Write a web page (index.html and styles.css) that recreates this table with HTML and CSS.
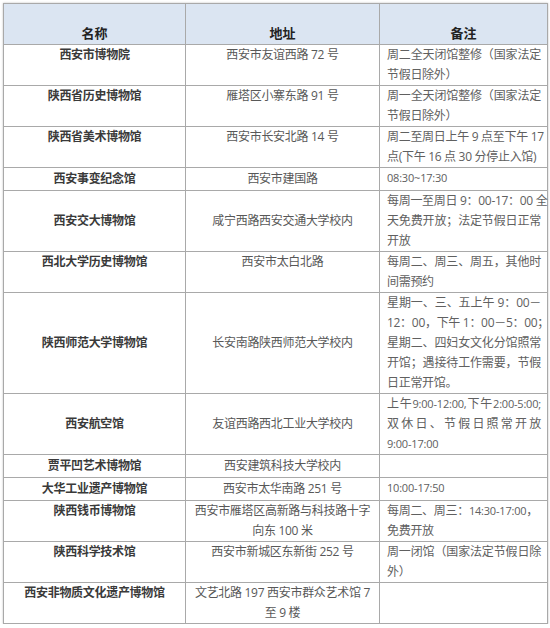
FILE: index.html
```html
<!DOCTYPE html>
<html lang="zh-CN">
<head>
<meta charset="utf-8">
<title>西安博物馆一览</title>
<link rel="stylesheet" href="styles.css">
</head>
<body>
<table class="museums">
  <colgroup>
    <col class="c-name">
    <col class="c-addr">
    <col class="c-note">
  </colgroup>
  <thead>
    <tr class="head">
      <th>名称</th>
      <th>地址</th>
      <th>备注</th>
    </tr>
  </thead>
  <tbody>
    <tr>
      <td class="name">西安市博物院</td>
      <td class="addr">西安市友谊西路 72 号</td>
      <td class="note"><span class="ln j">周二全天闭馆整修（国家法定</span><span class="ln">节假日除外）</span></td>
    </tr>
    <tr>
      <td class="name">陕西省历史博物馆</td>
      <td class="addr">雁塔区小寨东路 91 号</td>
      <td class="note"><span class="ln j">周一全天闭馆整修（国家法定</span><span class="ln">节假日除外）</span></td>
    </tr>
    <tr>
      <td class="name">陕西省美术博物馆</td>
      <td class="addr">西安市长安北路 14 号</td>
      <td class="note"><span class="ln j">周二至周日上午 9 点至下午 17</span><span class="ln">点(下午 16 点 30 分停止入馆)</span></td>
    </tr>
    <tr class="single">
      <td class="name">西安事变纪念馆</td>
      <td class="addr">西安市建国路</td>
      <td class="note"><span class="ln sm">08:30~17:30</span></td>
    </tr>
    <tr class="mid">
      <td class="name">西安交大博物馆</td>
      <td class="addr">咸宁西路西安交通大学校内</td>
      <td class="note"><span class="ln j">每周一至周日 9：00-17：00 全</span><span class="ln j">天免费开放；法定节假日正常</span><span class="ln">开放</span></td>
    </tr>
    <tr>
      <td class="name">西北大学历史博物馆</td>
      <td class="addr">西安市太白北路</td>
      <td class="note"><span class="ln j">每周二、周三、周五，其他时</span><span class="ln">间需预约</span></td>
    </tr>
    <tr class="mid">
      <td class="name">陕西师范大学博物馆</td>
      <td class="addr">长安南路陕西师范大学校内</td>
      <td class="note"><span class="ln j">星期一、三、五上午 9：00－</span><span class="ln j">12：00，下午 1：00－5：00；</span><span class="ln j">星期二、四妇女文化分馆照常</span><span class="ln j">开馆；遇接待工作需要，节假</span><span class="ln">日正常开馆。</span></td>
    </tr>
    <tr class="mid">
      <td class="name">西安航空馆</td>
      <td class="addr">友谊西路西北工业大学校内</td>
      <td class="note"><span class="ln j">上午<span class="sm">9:00-12:00,</span>下午<span class="sm">2:00-5:00;</span></span><span class="ln j">双休日、节假日照常开放</span><span class="ln sm">9:00-17:00</span></td>
    </tr>
    <tr class="single">
      <td class="name">贾平凹艺术博物馆</td>
      <td class="addr">西安建筑科技大学校内</td>
      <td class="note"></td>
    </tr>
    <tr class="single">
      <td class="name">大华工业遗产博物馆</td>
      <td class="addr">西安市太华南路 251 号</td>
      <td class="note"><span class="ln sm">10:00-17:50</span></td>
    </tr>
    <tr>
      <td class="name">陕西钱币博物馆</td>
      <td class="addr"><span class="ln">西安市雁塔区高新路与科技路十字</span><span class="ln">向东 100 米</span></td>
      <td class="note"><span class="ln">每周二、周三：<span class="sm">14:30-17:00</span>，</span><span class="ln">免费开放</span></td>
    </tr>
    <tr>
      <td class="name">陕西科学技术馆</td>
      <td class="addr">西安市新城区东新街 252 号</td>
      <td class="note"><span class="ln j">周一闭馆（国家法定节假日除</span><span class="ln">外）</span></td>
    </tr>
    <tr>
      <td class="name">西安非物质文化遗产博物馆</td>
      <td class="addr"><span class="ln">文艺北路 197 西安市群众艺术馆 7</span><span class="ln">至 9 楼</span></td>
      <td class="note"></td>
    </tr>
  </tbody>
</table>
</body>
</html>
```

FILE: styles.css
```css
html, body {
  margin: 0;
  padding: 0;
  background: #ffffff;
}

body {
  font-family: "Open Sans", "Noto Sans CJK SC", sans-serif;
  font-size: 12px;
  color: #555555;
}

.museums {
  margin: 3px 0 0 3px;
  width: 544px;
  table-layout: fixed;
  border-collapse: collapse;
  border: 1px solid #a9a9a9;
  box-shadow: 0 0 2px rgba(0, 0, 0, 0.25);
}

.c-name { width: 182px; }
.c-addr { width: 194px; }
.c-note { width: 168px; }

.museums th,
.museums td {
  border: 1px solid #a9a9a9;
  padding: 0;
  line-height: 20px;
  vertical-align: top;
  letter-spacing: -0.3px;
}

.head th {
  background: #dbe5f2;
  color: #222222;
  font-weight: bold;
  font-size: 13px;
  height: 39px;
  text-align: center;
  vertical-align: bottom;
  padding-bottom: 1px;
  letter-spacing: 0;
}

.name {
  text-align: center;
  font-weight: bold;
  color: #3a3a3a;
  white-space: nowrap;
}

.addr {
  text-align: center;
  white-space: nowrap;
  color: #585858;
}

.note {
  padding: 0 6px 0 7px !important;
  color: #606060;
  white-space: nowrap;
}

.ln {
  display: block;
}

.j {
  text-align: justify;
  text-align-last: justify;
}

.sm {
  font-size: 11px;
  letter-spacing: -0.2px;
}

.single td {
  height: 21px;
  padding-top: 1px;
}

.mid .name,
.mid .addr {
  vertical-align: middle;
}
```
